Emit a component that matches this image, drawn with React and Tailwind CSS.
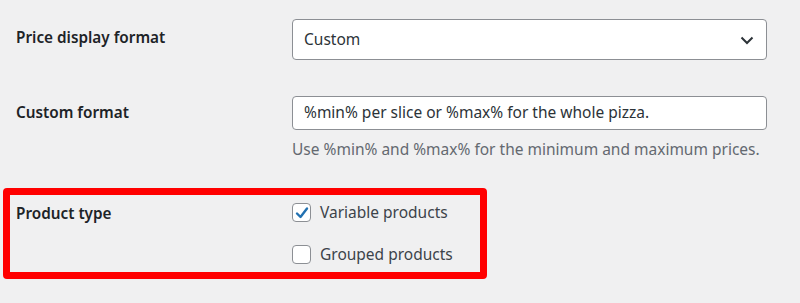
import React from "react";

function Chevron() {
  return (
    <svg width="14" height="14" viewBox="0 0 14 14" className="text-[#2c3338]">
      <path d="M1.5 4.5 L7 10 L12.5 4.5" fill="none" stroke="currentColor" strokeWidth="2" />
    </svg>
  );
}

function Checkbox({ checked }) {
  return (
    <span className="w-[19px] h-[19px] rounded-[4px] border border-[#8c8f94] bg-white flex items-center justify-center shrink-0">
      {checked && (
        <svg width="16" height="16" viewBox="0 0 16 16">
          <path d="M3 8.5 L6.5 12 L13 3.5" fill="none" stroke="#2271b1" strokeWidth="2.4" strokeLinecap="round" strokeLinejoin="round" />
        </svg>
      )}
    </span>
  );
}

export default function App() {
  return (
    <div className="w-[800px] h-[303px] bg-[#f0f0f1] text-[#1d2327] font-['Noto_Sans',sans-serif] text-[15.5px] overflow-hidden">
      <div className="pl-4 pt-[19px]">
        <div className="grid grid-cols-[276px_475px] items-start">
          <div className="font-semibold text-[15.3px] pt-[6px] leading-[24px]">Price display format</div>
          <div className="h-[41px] border border-[#8c8f94] rounded-[4px] bg-white flex items-center justify-between pl-[11px] pr-[12px] text-[#2c3338]">
            <span>Custom</span>
            <Chevron />
          </div>
        </div>

        <div className="grid grid-cols-[276px_475px] items-start mt-[36px]">
          <div className="font-semibold text-[15.3px] pt-[4px] leading-[24px]">Custom format</div>
          <div>
            <div className="h-[34px] border border-[#8c8f94] rounded-[4px] bg-white flex items-center pl-[11px] text-[#2c3338]">
              %min% per slice or %max% for the whole pizza.
            </div>
            <div className="mt-[8px] text-[#646970] leading-[22px]">
              Use %min% and %max% for the minimum and maximum prices.
            </div>
          </div>
        </div>

        <div className="relative mt-[43px]">
          <div className="absolute left-[-13px] top-[-15px] w-[484px] h-[91px] border-[7px] border-[#ff0000] rounded-[4px] pointer-events-none" />
          <div className="grid grid-cols-[276px_475px] items-start">
            <div className="font-semibold text-[15.3px] leading-[20px]">Product type</div>
            <div className="flex flex-col gap-[23px]">
              <label className="flex items-center gap-[9px] text-[#3c434a] leading-[19px]">
                <Checkbox checked />
                <span>Variable products</span>
              </label>
              <label className="flex items-center gap-[9px] text-[#3c434a] leading-[19px]">
                <Checkbox />
                <span>Grouped products</span>
              </label>
            </div>
          </div>
        </div>
      </div>
    </div>
  );
}
